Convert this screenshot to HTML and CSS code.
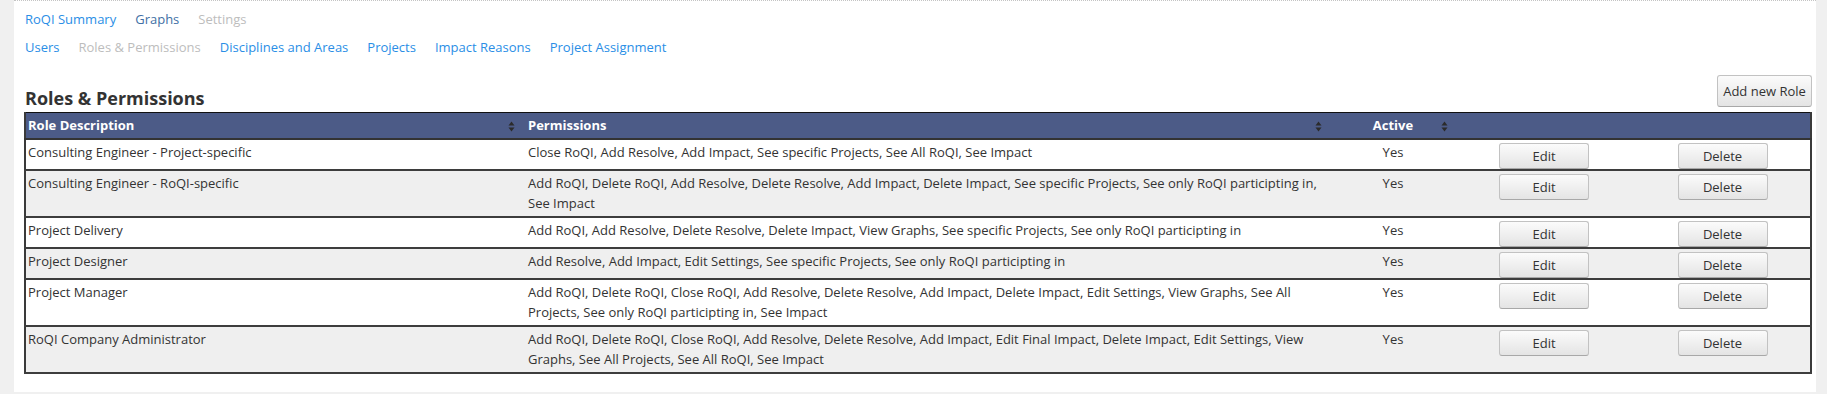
FILE: index.html
```html
<!DOCTYPE html>
<html lang="en">
<head>
<meta charset="utf-8">
<title>Roles &amp; Permissions</title>
<link rel="stylesheet" href="styles.css">
</head>
<body>
<div class="page">
  <nav class="nav">
    <a class="link" href="#">RoQI Summary</a>
    <a class="link link-visited" href="#">Graphs</a>
    <span class="link link-off">Settings</span>
  </nav>
  <nav class="nav nav-sub">
    <a class="link" href="#">Users</a>
    <span class="link link-off">Roles &amp; Permissions</span>
    <a class="link" href="#">Disciplines and Areas</a>
    <a class="link" href="#">Projects</a>
    <a class="link" href="#">Impact Reasons</a>
    <a class="link" href="#">Project Assignment</a>
  </nav>
  <div class="toolbar">
    <h1 class="title">Roles &amp; Permissions</h1>
    <button class="btn btn-add" type="button">Add new Role</button>
  </div>
  <table class="grid">
    <colgroup>
      <col class="c-role">
      <col class="c-perm">
      <col class="c-active">
      <col class="c-edit">
      <col class="c-del">
    </colgroup>
    <thead>
      <tr>
        <th class="sortable">Role Description<svg class="sort" viewBox="0 0 7 11" width="7" height="11"><path d="M0.5 4.5 L3.5 0.5 L6.5 4.5 Z M0.5 6.5 L3.5 10.5 L6.5 6.5 Z"/></svg></th>
        <th class="sortable">Permissions<svg class="sort" viewBox="0 0 7 11" width="7" height="11"><path d="M0.5 4.5 L3.5 0.5 L6.5 4.5 Z M0.5 6.5 L3.5 10.5 L6.5 6.5 Z"/></svg></th>
        <th class="sortable center sort-near">Active<svg class="sort" viewBox="0 0 7 11" width="7" height="11"><path d="M0.5 4.5 L3.5 0.5 L6.5 4.5 Z M0.5 6.5 L3.5 10.5 L6.5 6.5 Z"/></svg></th>
        <th></th>
        <th></th>
      </tr>
    </thead>
    <tbody>
      <tr>
        <td>Consulting Engineer - Project-specific</td>
        <td>Close RoQI, Add Resolve, Add Impact, See specific Projects, See All RoQI, See Impact</td>
        <td class="center">Yes</td>
        <td class="act"><button class="btn btn-row" type="button">Edit</button></td>
        <td class="act"><button class="btn btn-row" type="button">Delete</button></td>
      </tr>
      <tr>
        <td>Consulting Engineer - RoQI-specific</td>
        <td>Add RoQI, Delete RoQI, Add Resolve, Delete Resolve, Add Impact, Delete Impact, See specific Projects, See only RoQI participting in, See Impact</td>
        <td class="center">Yes</td>
        <td class="act"><button class="btn btn-row" type="button">Edit</button></td>
        <td class="act"><button class="btn btn-row" type="button">Delete</button></td>
      </tr>
      <tr>
        <td>Project Delivery</td>
        <td>Add RoQI, Add Resolve, Delete Resolve, Delete Impact, View Graphs, See specific Projects, See only RoQI participting in</td>
        <td class="center">Yes</td>
        <td class="act"><button class="btn btn-row" type="button">Edit</button></td>
        <td class="act"><button class="btn btn-row" type="button">Delete</button></td>
      </tr>
      <tr>
        <td>Project Designer</td>
        <td>Add Resolve, Add Impact, Edit Settings, See specific Projects, See only RoQI participting in</td>
        <td class="center">Yes</td>
        <td class="act"><button class="btn btn-row" type="button">Edit</button></td>
        <td class="act"><button class="btn btn-row" type="button">Delete</button></td>
      </tr>
      <tr>
        <td>Project Manager</td>
        <td>Add RoQI, Delete RoQI, Close RoQI, Add Resolve, Delete Resolve, Add Impact, Delete Impact, Edit Settings, View Graphs, See All Projects, See only RoQI participting in, See Impact</td>
        <td class="center">Yes</td>
        <td class="act"><button class="btn btn-row" type="button">Edit</button></td>
        <td class="act"><button class="btn btn-row" type="button">Delete</button></td>
      </tr>
      <tr>
        <td>RoQI Company Administrator</td>
        <td>Add RoQI, Delete RoQI, Close RoQI, Add Resolve, Delete Resolve, Add Impact, Edit Final Impact, Delete Impact, Edit Settings, View Graphs, See All Projects, See All RoQI, See Impact</td>
        <td class="center">Yes</td>
        <td class="act"><button class="btn btn-row" type="button">Edit</button></td>
        <td class="act"><button class="btn btn-row" type="button">Delete</button></td>
      </tr>
    </tbody>
  </table>
</div>
</body>
</html>
```
FILE: styles.css
```css
html, body {
  margin: 0;
  padding: 0;
}
body {
  background: #f0f0f0;
  font-family: "Open Sans", "DejaVu Sans", sans-serif;
  font-size: 13px;
  color: #333;
  height: 394px;
  overflow: hidden;
}
.page {
  box-sizing: border-box;
  margin-left: 14px;
  width: 1802px;
  height: 392px;
  background: #fff;
  border-top: 1px dotted #c4c4c4;
  padding: 9px 4px 0 10px;
}
.nav {
  display: flex;
  gap: 19px;
  line-height: 18px;
  padding-left: 1px;
}
.nav-sub {
  margin-top: 10px;
}
.link {
  color: #2a8ee6;
  text-decoration: none;
}
.link-visited {
  color: #416fa5;
}
.link-off {
  color: #bdbdbd;
}
.toolbar {
  display: flex;
  justify-content: space-between;
  align-items: flex-end;
  margin-top: 19px;
}
.title {
  margin: 0;
  font-size: 18px;
  line-height: 24px;
  font-weight: bold;
  color: #333;
  padding-left: 1px;
}
.btn {
  font-family: "Open Sans", "DejaVu Sans", sans-serif;
  font-size: 13px;
  color: #333;
  background: linear-gradient(#fbfbfb, #e4e4e4);
  border: 1px solid #c2c2c2;
  border-bottom-color: #a8a8a8;
  border-radius: 3px;
  padding: 0;
  cursor: pointer;
}
.btn-add {
  width: 95px;
  height: 32px;
  margin-bottom: 3px;
}
.grid {
  margin-top: 2px;
  width: 100%;
  table-layout: fixed;
  border-collapse: collapse;
  border: 2px solid #3a3a3a;
  border-top: 1px solid #111;
}
.c-role { width: 501px; }
.c-perm { width: 807px; }
.c-active { width: 120px; }
.c-edit { width: 182px; }
.c-del { width: 176px; }
th {
  position: relative;
  background: #4c5b87;
  color: #fff;
  font-weight: bold;
  text-align: left;
  line-height: 19px;
  padding: 3px 2px 3px 2px;
  border-bottom: 2px solid #333;
}
.sort {
  position: absolute;
  right: 11px;
  top: 8px;
  fill: #2b2b2b;
}
.sort-near .sort {
  right: 5px;
}
td {
  vertical-align: top;
  line-height: 19.5px;
  padding: 3px 2px;
  border-bottom: 2px solid #3d3d3d;
}
tbody tr:nth-child(even) td {
  background: #efefef;
}
.center {
  text-align: center;
}
th.center {
  text-align: center;
}
td.act {
  text-align: center;
  padding: 3px 0 0;
}
.btn-row {
  width: 90px;
  height: 26px;
  vertical-align: top;
}
```
